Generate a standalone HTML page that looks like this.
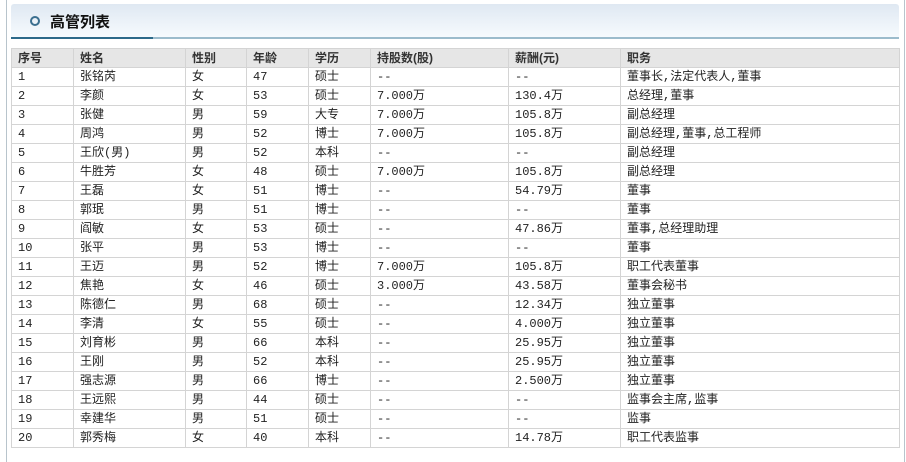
<!DOCTYPE html>
<html><head><meta charset="utf-8"><style>
body{margin:0;background:#fff;width:906px;height:462px;overflow:hidden;position:relative;font-family:"Liberation Mono","Noto Sans CJK SC",monospace;font-size:12px;color:#222}
.lb{position:absolute;left:6px;top:0;width:1px;height:462px;background:#b8c4cc}
.rb{position:absolute;left:904px;top:0;width:1px;height:462px;background:#b8c4cc}
.hd{position:absolute;left:11px;top:4px;width:888px;height:34px;background:linear-gradient(#dfe8f2,#f7fbfe);border-radius:3px 3px 0 0}
.ul{position:absolute;left:11px;top:37px;width:888px;height:2px;background:#9cbccc}
.ul2{position:absolute;left:11px;top:37px;width:142px;height:2px;background:#2d6a8a}
.ci{position:absolute;left:30px;top:16px;width:6px;height:6px;border:2px solid #3b6f8f;border-radius:50%}
.tt{position:absolute;left:50px;top:11px;font:bold 15px "Liberation Sans","Noto Sans CJK SC",sans-serif;color:#111}
table{position:absolute;left:11px;top:48px;width:889px;border-collapse:collapse;table-layout:fixed}
td,th{border:1px solid #d4d4d4;height:18px;padding:0 0 0 6px;text-align:left;white-space:nowrap;line-height:18px}
th{background:#e6e6e6;font-weight:bold;font-family:"Liberation Sans","Noto Sans CJK SC",sans-serif;color:#333;height:18px}
</style></head><body>
<div class="lb"></div><div class="rb"></div>
<div class="hd"></div><div class="ul"></div><div class="ul2"></div>
<div class="ci"></div><div class="tt">高管列表</div>
<table>
<colgroup><col style="width:62px"><col style="width:112px"><col style="width:61px"><col style="width:62px"><col style="width:62px"><col style="width:138px"><col style="width:112px"><col></colgroup>
<tr><th>序号</th><th>姓名</th><th>性别</th><th>年龄</th><th>学历</th><th>持股数(股)</th><th>薪酬(元)</th><th>职务</th></tr>
<tr><td>1</td><td>张铭芮</td><td>女</td><td>47</td><td>硕士</td><td>--</td><td>--</td><td>董事长,法定代表人,董事</td></tr>
<tr><td>2</td><td>李颜</td><td>女</td><td>53</td><td>硕士</td><td>7.000万</td><td>130.4万</td><td>总经理,董事</td></tr>
<tr><td>3</td><td>张健</td><td>男</td><td>59</td><td>大专</td><td>7.000万</td><td>105.8万</td><td>副总经理</td></tr>
<tr><td>4</td><td>周鸿</td><td>男</td><td>52</td><td>博士</td><td>7.000万</td><td>105.8万</td><td>副总经理,董事,总工程师</td></tr>
<tr><td>5</td><td>王欣(男)</td><td>男</td><td>52</td><td>本科</td><td>--</td><td>--</td><td>副总经理</td></tr>
<tr><td>6</td><td>牛胜芳</td><td>女</td><td>48</td><td>硕士</td><td>7.000万</td><td>105.8万</td><td>副总经理</td></tr>
<tr><td>7</td><td>王磊</td><td>女</td><td>51</td><td>博士</td><td>--</td><td>54.79万</td><td>董事</td></tr>
<tr><td>8</td><td>郭珉</td><td>男</td><td>51</td><td>博士</td><td>--</td><td>--</td><td>董事</td></tr>
<tr><td>9</td><td>阎敏</td><td>女</td><td>53</td><td>硕士</td><td>--</td><td>47.86万</td><td>董事,总经理助理</td></tr>
<tr><td>10</td><td>张平</td><td>男</td><td>53</td><td>博士</td><td>--</td><td>--</td><td>董事</td></tr>
<tr><td>11</td><td>王迈</td><td>男</td><td>52</td><td>博士</td><td>7.000万</td><td>105.8万</td><td>职工代表董事</td></tr>
<tr><td>12</td><td>焦艳</td><td>女</td><td>46</td><td>硕士</td><td>3.000万</td><td>43.58万</td><td>董事会秘书</td></tr>
<tr><td>13</td><td>陈德仁</td><td>男</td><td>68</td><td>硕士</td><td>--</td><td>12.34万</td><td>独立董事</td></tr>
<tr><td>14</td><td>李清</td><td>女</td><td>55</td><td>硕士</td><td>--</td><td>4.000万</td><td>独立董事</td></tr>
<tr><td>15</td><td>刘育彬</td><td>男</td><td>66</td><td>本科</td><td>--</td><td>25.95万</td><td>独立董事</td></tr>
<tr><td>16</td><td>王刚</td><td>男</td><td>52</td><td>本科</td><td>--</td><td>25.95万</td><td>独立董事</td></tr>
<tr><td>17</td><td>强志源</td><td>男</td><td>66</td><td>博士</td><td>--</td><td>2.500万</td><td>独立董事</td></tr>
<tr><td>18</td><td>王远熙</td><td>男</td><td>44</td><td>硕士</td><td>--</td><td>--</td><td>监事会主席,监事</td></tr>
<tr><td>19</td><td>幸建华</td><td>男</td><td>51</td><td>硕士</td><td>--</td><td>--</td><td>监事</td></tr>
<tr><td>20</td><td>郭秀梅</td><td>女</td><td>40</td><td>本科</td><td>--</td><td>14.78万</td><td>职工代表监事</td></tr>
</table>
</body></html>
